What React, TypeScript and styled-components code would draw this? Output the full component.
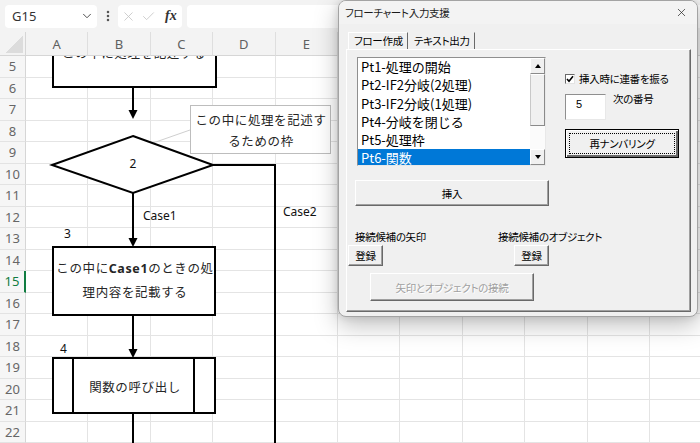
import styled, { createGlobalStyle } from 'styled-components';
import { ChevronDown, EllipsisVertical, X, Check } from 'lucide-react';

const GlobalStyle = createGlobalStyle`
  html, body {
    margin: 0;
    padding: 0;
    background: #ffffff;
  }
  body {
    font-family: 'Noto Sans', 'Noto Sans CJK JP', sans-serif;
  }
`;

const Screen = styled.div`
  position: relative;
  width: 700px;
  height: 443px;
  overflow: hidden;
  background: #ffffff;
`;

/* ---------- excel formula bar ---------- */

const FormulaBar = styled.div`
  display: flex;
  align-items: center;
  height: 32px;
  padding-left: 5px;
  background: #f3f3f3;
  box-sizing: border-box;
`;

const NameBox = styled.div`
  display: flex;
  align-items: center;
  justify-content: space-between;
  width: 92px;
  height: 23px;
  padding: 0 3px 0 7px;
  box-sizing: border-box;
  background: #ffffff;
  border-radius: 4px;
  font-size: 13px;
  color: #333333;
`;

const Grip = styled.div`
  display: flex;
  justify-content: center;
  width: 21px;
  color: #555555;
`;

const FxBox = styled.div`
  display: flex;
  align-items: center;
  gap: 5px;
  width: 64px;
  height: 23px;
  padding-left: 3px;
  box-sizing: border-box;
  background: #ffffff;
  border-radius: 4px;
  color: #c4c4c4;
`;

const FxLabel = styled.span`
  margin-left: 4px;
  font-family: 'Liberation Serif', serif;
  font-style: italic;
  font-weight: bold;
  font-size: 14px;
  color: #333333;
`;

const FormulaInput = styled.div`
  flex: 1;
  height: 23px;
  margin-left: 5px;
  background: #ffffff;
  border-radius: 4px 0 0 4px;
`;

/* ---------- excel grid ---------- */

const Sheet = styled.div`
  display: grid;
  grid-template-columns: 26px repeat(11, 62.4px);
  grid-template-rows: 24px repeat(18, 21.5px);
  background: #ffffff;
`;

const Corner = styled.div`
  position: relative;
  background: #f3f3f3;
  border-right: 1px solid #d6d6d6;
  border-bottom: 1px solid #d6d6d6;
  &::after {
    content: '';
    position: absolute;
    left: 5px;
    top: 4px;
    right: 2px;
    bottom: 2px;
    background: linear-gradient(to bottom right, transparent 50%, #dcdcdc 50%);
  }
`;

const ColHead = styled.div`
  display: flex;
  align-items: center;
  justify-content: center;
  background: #f3f3f3;
  border-right: 1px solid #dedede;
  border-bottom: 1px solid #d6d6d6;
  font-size: 13px;
  color: #606060;
  box-sizing: border-box;
`;

const RowHead = styled.div<{ $active?: boolean }>`
  display: flex;
  align-items: center;
  justify-content: center;
  background: #f6f6f6;
  border-right: ${p => (p.$active ? '2px solid #107c41' : '1px solid #d6d6d6')};
  border-bottom: 1px solid #e3e3e3;
  font-size: 13px;
  color: ${p => (p.$active ? '#107c41' : '#666666')};
  box-sizing: border-box;
`;

const Cell = styled.div`
  border-right: 1px solid #e4e4e4;
  border-bottom: 1px solid #e4e4e4;
  box-sizing: border-box;
`;

/* ---------- flowchart drawing ---------- */

const Canvas = styled.svg`
  position: absolute;
  left: 0;
  top: 0;
  pointer-events: none;
`;

const ShapeText = styled.text`
  font-family: 'Noto Sans CJK JP', sans-serif;
  font-size: 12.5px;
  fill: #262626;
  letter-spacing: 0.6px;
`;

const NumLabel = styled.text`
  font-family: 'Noto Sans', sans-serif;
  font-size: 12px;
  fill: #111111;
`;

/* ---------- userform dialog ---------- */

const Dialog = styled.div`
  position: absolute;
  left: 338px;
  top: 0;
  width: 360px;
  height: 317px;
  box-sizing: border-box;
  display: flex;
  flex-direction: column;
  background: #f0f0f0;
  border: 1px solid #a3a3a3;
  border-radius: 8px;
  box-shadow: 0 8px 24px rgba(0, 0, 0, 0.26), 0 0 8px rgba(0, 0, 0, 0.12);
  font-family: 'Noto Sans CJK JP', sans-serif;
  font-size: 10.5px;
  font-feature-settings: 'palt' 1;
  letter-spacing: -0.3px;
  color: #000000;
  overflow: hidden;
`;

const TitleBar = styled.div`
  display: flex;
  align-items: center;
  justify-content: space-between;
  height: 23px;
  padding: 0 9px 0 6px;
  background: #f3f3f3;
  color: #1a1a1a;
  white-space: nowrap;
`;

const Body = styled.div`
  flex: 1;
  display: flex;
  flex-direction: column;
  padding: 8px 6px 4px 7px;
`;

const TabStrip = styled.div`
  display: flex;
  height: 17px;
  margin-left: 2px;
`;

const Tab = styled.div<{ $active?: boolean; $w: number }>`
  min-width: ${p => p.$w}px;
  padding: 0 4px 0 5px;
  box-sizing: border-box;
  line-height: 15px;
  white-space: nowrap;
  border-top: 1px solid ${p => (p.$active ? '#ffffff' : 'transparent')};
  border-left: 1px solid ${p => (p.$active ? '#ffffff' : 'transparent')};
  border-right: 1px solid #696969;
`;

const Frame = styled.div`
  flex: 1;
  display: flex;
  flex-direction: column;
  padding: 7px 0 0 8px;
  border: 1px solid;
  border-color: #ffffff #696969 #696969 #ffffff;
  box-shadow: inset -1px -1px 0 #a0a0a0;
`;

const TopRow = styled.div`
  display: flex;
  gap: 16px;
`;

const LeftCol = styled.div`
  display: flex;
  flex-direction: column;
  width: 194px;
`;

const ListBox = styled.div`
  display: flex;
  width: 189px;
  height: 109px;
  margin-left: 2px;
  box-sizing: border-box;
  background: #ffffff;
  border: 1px solid;
  border-color: #8f8f8f #e8e8e8 #e8e8e8 #8f8f8f;
  overflow: hidden;
`;

const Items = styled.div`
  flex: 1;
  font-size: 13px;
  letter-spacing: 0;
  font-feature-settings: normal;
`;

const Item = styled.div<{ $selected?: boolean }>`
  height: 18.3px;
  line-height: 18.3px;
  padding-left: 3px;
  white-space: nowrap;
  background: ${p => (p.$selected ? '#0078d7' : 'transparent')};
  color: ${p => (p.$selected ? '#ffffff' : '#000000')};
`;

const ScrollBar = styled.div`
  display: flex;
  flex-direction: column;
  width: 15px;
  background: #fbfbfb;
`;

const ScrollBtn = styled.div`
  display: flex;
  align-items: center;
  justify-content: center;
  height: 16px;
  box-sizing: border-box;
  background: #f0f0f0;
  border: 1px solid;
  border-color: #ffffff #8a8a8a #8a8a8a #ffffff;
`;

const Arrow = styled.span<{ $up?: boolean }>`
  width: 0;
  height: 0;
  border-left: 3.5px solid transparent;
  border-right: 3.5px solid transparent;
  ${p => (p.$up ? 'border-bottom: 4px solid #000;' : 'border-top: 4px solid #000;')}
`;

const Thumb = styled.div`
  height: 52px;
  box-sizing: border-box;
  background: #f0f0f0;
  border: 1px solid;
  border-color: #ffffff #8a8a8a #8a8a8a #c8c8c8;
`;

const Track = styled.div`
  flex: 1;
`;

const Button = styled.div<{ $w: number; $h: number; $disabled?: boolean }>`
  display: flex;
  align-items: center;
  justify-content: center;
  width: ${p => p.$w}px;
  height: ${p => p.$h}px;
  box-sizing: border-box;
  white-space: nowrap;
  background: #f0f0f0;
  border: 1px solid;
  border-color: #ffffff #696969 #696969 #ffffff;
  box-shadow: inset -1px -1px 0 #a0a0a0;
  color: ${p => (p.$disabled ? '#a0a0a0' : '#000000')};
  text-shadow: ${p => (p.$disabled ? '1px 1px 0 #ffffff' : 'none')};
`;

const InsertButton = styled(Button)`
  margin-top: 14px;
`;

const RightCol = styled.div`
  display: flex;
  flex-direction: column;
  padding-top: 16px;
`;

const CheckRow = styled.label`
  display: flex;
  align-items: center;
  gap: 4px;
  height: 11px;
  white-space: nowrap;
`;

const CheckBox = styled.span`
  display: flex;
  align-items: center;
  justify-content: center;
  width: 10px;
  height: 10px;
  box-sizing: border-box;
  background: #ffffff;
  border: 1px solid;
  border-color: #696969 #e3e3e3 #e3e3e3 #696969;
`;

const NumberRow = styled.div`
  display: flex;
  margin-top: 10px;
`;

const NumberInput = styled.div`
  width: 41px;
  height: 26px;
  box-sizing: border-box;
  padding: 2px 0 0 10px;
  background: #ffffff;
  border: 1px solid;
  border-color: #8f8f8f #e8e8e8 #e8e8e8 #8f8f8f;
  font-family: 'Liberation Sans', sans-serif;
  font-size: 11px;
  line-height: 14px;
`;

const SideLabel = styled.span`
  margin: -2px 0 0 7px;
  line-height: 14px;
  white-space: nowrap;
`;

const DefaultButton = styled(Button)`
  position: relative;
  margin-top: 9px;
  border-color: #000000;
  box-shadow: inset 1px 1px 0 #ffffff, inset -2px -2px 0 #696969;
  &::after {
    content: '';
    position: absolute;
    inset: 3px;
    border: 1px dotted #000000;
  }
`;

const ConnectRow = styled.div`
  display: grid;
  grid-template-columns: 143px auto;
  margin-top: 24px;
`;

const ConnectCol = styled.div<{ $shift: number }>`
  display: flex;
  flex-direction: column;
  align-items: flex-start;
  & > div {
    margin: 1px 0 0 ${p => p.$shift}px;
  }
`;

const FieldLabel = styled.span`
  line-height: 14px;
  white-space: nowrap;
`;

const ConnectButton = styled(Button)`
  margin: 7px 0 0 15px;
`;

// only A-E show; the rest of the header sits behind the dialog
const columns = ['A', 'B', 'C', 'D', 'E', '', '', '', '', '', ''];
const rows = Array.from({ length: 18 }, (_, i) => i + 5);
const items = [
  'Pt1-処理の開始',
  'Pt2-IF2分岐(2処理)',
  'Pt3-IF2分岐(1処理)',
  'Pt4-分岐を閉じる',
  'Pt5-処理枠',
  'Pt6-関数',
];

const Flowchart = () => (
  <Canvas width={700} height={443} viewBox="0 0 700 443">
    <defs>
      <clipPath id="sheetBody">
        <rect x={26} y={56} width={674} height={387} />
      </clipPath>
    </defs>
    <g clipPath="url(#sheetBody)" stroke="#000" strokeWidth={2} fill="none">
      <rect x={53} y={10} width={163} height={77} fill="#fff" />
      <ShapeText x={134} y={57.5} textAnchor="middle" stroke="none" fill="#9a9a9a">
        この中に処理を記述する
      </ShapeText>
      <line x1={133} y1={87} x2={133} y2={111} />
      <polygon points="128.5,110 137.5,110 133,119" fill="#000" stroke="none" />

      <line x1={133} y1={150} x2={190} y2={130} stroke="#cfcfcf" strokeWidth={1} />
      <rect x={190.5} y={105.5} width={140} height={48} fill="#fff" stroke="#bdbdbd" strokeWidth={1} />

      <polygon points="133,136 213,165 133,193 52,165" fill="#fff" />
      <polyline points="213,165 275,165 275,445" />
      <line x1={133} y1={193} x2={133} y2={239} />
      <polygon points="128.5,238 137.5,238 133,247" fill="#000" stroke="none" />

      <rect x={53} y={247} width={162} height={68} fill="#fff" />
      <line x1={133} y1={315} x2={133} y2={350} />
      <polygon points="128.5,349 137.5,349 133,358" fill="#000" stroke="none" />

      <rect x={53} y={358} width={162} height={55} fill="#fff" />
      <line x1={73} y1={358} x2={73} y2={413} />
      <line x1={194} y1={358} x2={194} y2={413} />
      <line x1={133} y1={413} x2={133} y2={445} />
    </g>

    <ShapeText x={261} y={124.5} textAnchor="middle">この中に処理を記述す</ShapeText>
    <ShapeText x={261} y={146} textAnchor="middle">るための枠</ShapeText>

    <NumLabel x={133} y={168} textAnchor="middle">2</NumLabel>
    <NumLabel x={143} y={220}>Case1</NumLabel>
    <NumLabel x={283} y={216}>Case2</NumLabel>
    <NumLabel x={64} y={238}>3</NumLabel>
    <NumLabel x={60} y={353}>4</NumLabel>

    <ShapeText x={135} y={272.5} textAnchor="middle">
      この中に<tspan fontWeight={700} fontFamily="'Noto Sans', sans-serif">Case1</tspan>のときの処
    </ShapeText>
    <ShapeText x={135} y={296.5} textAnchor="middle">理内容を記載する</ShapeText>
    <ShapeText x={135} y={391.5} textAnchor="middle">関数の呼び出し</ShapeText>
  </Canvas>
);

const App = () => (
  <Screen>
    <GlobalStyle />
    <FormulaBar>
      <NameBox>
        G15
        <ChevronDown size={14} strokeWidth={1.6} color="#444" />
      </NameBox>
      <Grip>
        <EllipsisVertical size={14} strokeWidth={2.4} />
      </Grip>
      <FxBox>
        <X size={15} strokeWidth={1.3} />
        <Check size={15} strokeWidth={1.3} />
        <FxLabel>fx</FxLabel>
      </FxBox>
      <FormulaInput />
    </FormulaBar>

    <Sheet>
      <Corner />
      {columns.map((c, i) => (
        <ColHead key={`c${i}`}>{c}</ColHead>
      ))}
      {rows.map(r => [
        <RowHead key={`h${r}`} $active={r === 15}>
          {r}
        </RowHead>,
        ...columns.map((_, i) => <Cell key={`${r}-${i}`} />),
      ])}
    </Sheet>

    <Flowchart />

    <Dialog>
      <TitleBar>
        <span>フローチャート入力支援</span>
        <X size={13} strokeWidth={1.3} color="#222" />
      </TitleBar>
      <Body>
        <TabStrip>
          <Tab $active $w={58}>フロー作成</Tab>
          <Tab $w={64}>テキスト出力</Tab>
        </TabStrip>
        <Frame>
          <TopRow>
            <LeftCol>
              <ListBox>
                <Items>
                  {items.map((it, i) => (
                    <Item key={it} $selected={i === items.length - 1}>
                      {it}
                    </Item>
                  ))}
                </Items>
                <ScrollBar>
                  <ScrollBtn>
                    <Arrow $up />
                  </ScrollBtn>
                  <Thumb />
                  <Track />
                  <ScrollBtn>
                    <Arrow />
                  </ScrollBtn>
                </ScrollBar>
              </ListBox>
              <InsertButton $w={194} $h={26}>挿入</InsertButton>
            </LeftCol>
            <RightCol>
              <CheckRow>
                <CheckBox>
                  <svg width="8" height="8" viewBox="0 0 8 8">
                    <path d="M1 4 L3 6.2 L7 1.2" stroke="#000" strokeWidth="1.6" fill="none" />
                  </svg>
                </CheckBox>
                挿入時に連番を振る
              </CheckRow>
              <NumberRow>
                <NumberInput>5</NumberInput>
                <SideLabel>次の番号</SideLabel>
              </NumberRow>
              <DefaultButton $w={114} $h={29}>再ナンバリング</DefaultButton>
            </RightCol>
          </TopRow>
          <ConnectRow>
            <ConnectCol $shift={-7}>
              <FieldLabel>接続候補の矢印</FieldLabel>
              <Button $w={35} $h={21}>登録</Button>
            </ConnectCol>
            <ConnectCol $shift={16}>
              <FieldLabel>接続候補のオブジェクト</FieldLabel>
              <Button $w={35} $h={21}>登録</Button>
            </ConnectCol>
          </ConnectRow>
          <ConnectButton $w={164} $h={28} $disabled>
            矢印とオブジェクトの接続
          </ConnectButton>
        </Frame>
      </Body>
    </Dialog>
  </Screen>
);

export default App;
